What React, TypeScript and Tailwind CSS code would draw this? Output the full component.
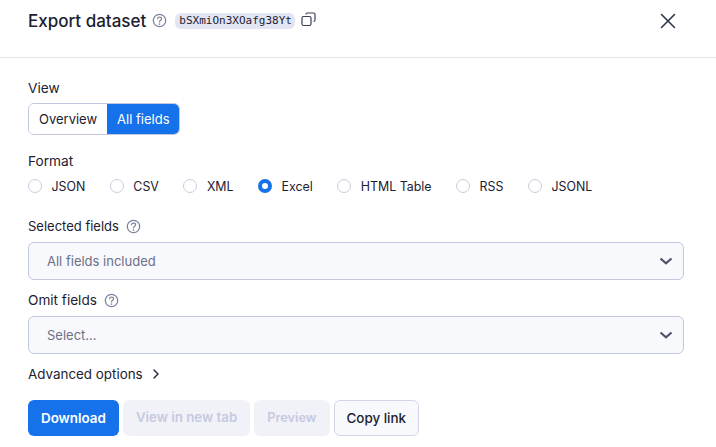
import { ChevronRight, X } from "lucide-react";

const FORMATS = ["JSON", "CSV", "XML", "Excel", "HTML Table", "RSS", "JSONL"];

const HelpIcon = () => (
  <svg width="15" height="15" viewBox="0 0 16 16" fill="none" className="text-[#7f849e]">
    <circle cx="8" cy="8" r="6.6" stroke="currentColor" strokeWidth="1.4" />
    <path
      d="M5.800 6.200C5.900 5 6.800 4.300 8 4.300c1.300 0 2.200.8 2.200 1.900 0 .9-.5 1.300-1.200 1.800-.6.4-1 .7-1 1.400v.2"
      stroke="currentColor"
      strokeWidth="1.3"
      strokeLinecap="round"
    />
    <circle cx="8" cy="11.700" r=".9" fill="currentColor" />
  </svg>
);

const CopyIcon = () => (
  <svg width="15" height="15" viewBox="0 0 15 15" fill="none" className="text-[#3b4054]">
    <rect x="1" y="4.5" width="9" height="9" rx="1.5" stroke="currentColor" strokeWidth="1.2" />
    <path
      d="M5 2.5C5 1.7 5.7 1 6.5 1h6c.8 0 1.5.7 1.5 1.500v5.500c0 .8-.7 1.500-1.500 1.500"
      stroke="currentColor"
      strokeWidth="1.2"
    />
  </svg>
);

const SelectBox = ({ text }: { text: string }) => (
  <div className="flex items-center justify-between h-[38px] pl-[18px] pr-[10px] bg-[#f8f9fc] border border-[#c2c8e0] rounded-[6px]">
    <span className="pt-[2px] text-[13px] text-[#6c7086]">{text}</span>
    <svg width="14" height="14" viewBox="0 0 14 14" fill="none">
      <path d="M1.500 4.500 7 9.300l5.500-4.800" stroke="#4c5268" strokeWidth="2.200" />
    </svg>
  </div>
);

const App = () => {
  return (
    <div className="w-[716px] h-[447px] overflow-hidden bg-white text-[#1c2130] font-['Inter',sans-serif] text-[13px]">
      {/* Header */}
      <div className="flex items-center justify-between h-[58px] pb-[16px] pl-[28px] pr-[35px] border-b border-[#e3e4ee]">
        <div className="flex items-center">
          <h2 className="text-[17px] leading-[24px] font-medium">Export dataset</h2>
          <span className="ml-[6px]">
            <HelpIcon />
          </span>
          <span className="ml-[8px] pl-[4px] pr-[3px] h-[16px] leading-[16px] rounded-[6px] bg-[#e3e5f3] text-[11px] font-['DejaVu_Sans_Mono',monospace]">
            bSXmiOn3XOafg38Yt
          </span>
          <span className="ml-[6px] mb-[3px]">
            <CopyIcon />
          </span>
        </div>
        <X size={26} strokeWidth={1.5} className="text-[#33384c]" />
      </div>

      <div className="px-[32px] pl-[28px]">
        {/* View */}
        <div className="mt-[21px] leading-[18px] text-[13.7px]">View</div>
        <div className="mt-[6px] inline-flex h-[32px] rounded-[6px] border border-[#c2c8e0] overflow-hidden">
          <span className="flex items-center pt-[2px] px-[10px] bg-white">Overview</span>
          <span className="flex items-center pt-[2px] pl-[10px] pr-[9px] bg-[#1672eb] text-white">All fields</span>
        </div>

        {/* Format */}
        <div className="mt-[17px] leading-[18px] text-[13.7px]">Format</div>
        <div className="mt-[7px] flex items-center h-[18px] gap-[24.500px]">
          {FORMATS.map((format) => (
            <div key={format} className="flex items-center gap-[9.500px]">
              {format === "Excel" ? (
                <span className="w-[14px] h-[14px] rounded-full border-[4px] border-[#1672eb] bg-white" />
              ) : (
                <span className="w-[14px] h-[14px] rounded-full border border-[#c9cde0] bg-white" />
              )}
              <span className="pt-[2px] text-[12.4px]">{format}</span>
            </div>
          ))}
        </div>

        {/* Selected fields */}
        <div className="mt-[22px] flex items-center gap-[7px] leading-[18px]">
          Selected fields <HelpIcon />
        </div>
        <div className="mt-[7px]">
          <SelectBox text="All fields included" />
        </div>

        {/* Omit fields */}
        <div className="mt-[11px] flex items-center gap-[7px] leading-[18px] text-[13.6px]">
          Omit fields <HelpIcon />
        </div>
        <div className="mt-[7px]">
          <SelectBox text="Select..." />
        </div>

        {/* Advanced */}
        <div className="mt-[11px] flex items-center gap-[5px] leading-[18px] text-[13.4px]">
          Advanced options <ChevronRight size={16} strokeWidth={2} />
        </div>

        {/* Buttons */}
        <div className="mt-[17px] flex gap-[4px] text-[13.4px]">
          <button className="h-[36px] px-[13px] rounded-[6px] bg-[#1672eb] text-white font-semibold">Download</button>
          <button className="h-[36px] px-[13px] rounded-[6px] bg-[#f1f2f8] text-[#c5c9e0] text-[13.3px] font-semibold">
            View in new tab
          </button>
          <button className="h-[36px] px-[13px] rounded-[6px] bg-[#f1f2f8] text-[#c5c9e0] text-[12.8px] font-semibold">
            Preview
          </button>
          <button className="h-[36px] px-[12px] rounded-[6px] bg-[#f8f9fc] border border-[#d3d6e8] font-medium">
            Copy link
          </button>
        </div>
      </div>
    </div>
  );
};

export default App;
